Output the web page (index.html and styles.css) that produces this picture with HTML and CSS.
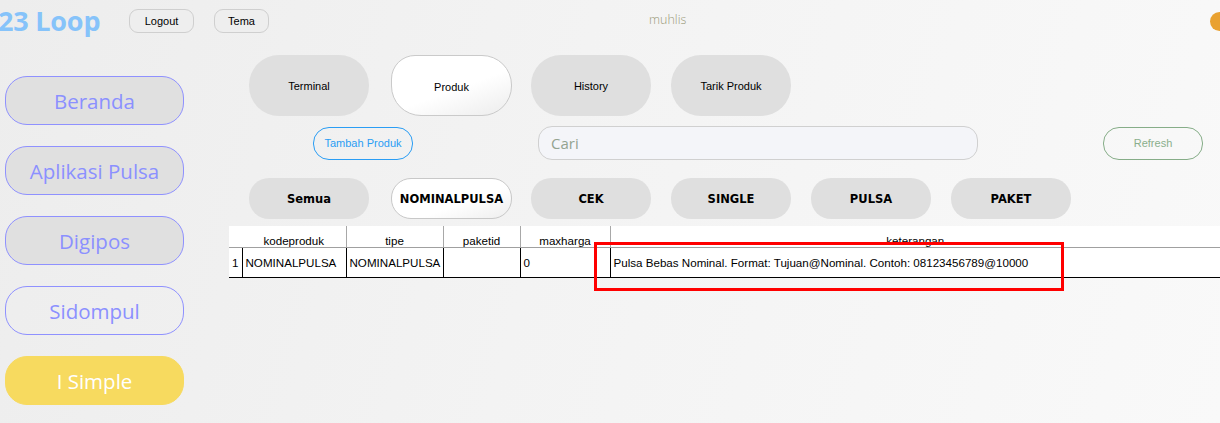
FILE: index.html
```html
<!DOCTYPE html>
<html lang="id">
<head>
    <meta charset="UTF-8">
    <title>23 Loop</title>
    <link rel="stylesheet" href="styles.css">
</head>
<body>
    <div class="topbar">
        <div class="brand">23 Loop</div>
        <button class="small-btn logout">Logout</button>
        <button class="small-btn tema">Tema</button>
        <div class="user">muhlis</div>
        <div class="status-dot"></div>
    </div>

    <div class="layout">
        <div class="sidebar">
            <button class="side-btn">Beranda</button>
            <button class="side-btn">Aplikasi Pulsa</button>
            <button class="side-btn">Digipos</button>
            <button class="side-btn plain">Sidompul</button>
            <button class="side-btn active">I Simple</button>
        </div>

        <div class="main">
            <div class="tabs">
                <button class="tab">Terminal</button>
                <button class="tab selected">Produk</button>
                <button class="tab">History</button>
                <button class="tab">Tarik Produk</button>
            </div>

            <div class="toolbar">
                <button class="add-btn">Tambah Produk</button>
                <input class="search" type="text" placeholder="Cari">
                <button class="refresh-btn">Refresh</button>
            </div>

            <div class="filters">
                <button class="filter">Semua</button>
                <button class="filter selected">NOMINALPULSA</button>
                <button class="filter">CEK</button>
                <button class="filter">SINGLE</button>
                <button class="filter">PULSA</button>
                <button class="filter">PAKET</button>
            </div>

            <div class="grid-wrap">
                <table class="grid">
                    <colgroup>
                        <col class="w-num">
                        <col class="w-kode">
                        <col class="w-tipe">
                        <col class="w-paket">
                        <col class="w-max">
                        <col>
                    </colgroup>
                    <thead>
                        <tr>
                            <th class="num"></th>
                            <th class="first">kodeproduk</th>
                            <th>tipe</th>
                            <th>paketid</th>
                            <th>maxharga</th>
                            <th>keterangan</th>
                        </tr>
                    </thead>
                    <tbody>
                        <tr>
                            <td class="num">1</td>
                            <td>NOMINALPULSA</td>
                            <td>NOMINALPULSA</td>
                            <td></td>
                            <td>0</td>
                            <td>Pulsa Bebas Nominal. Format: Tujuan@Nominal. Contoh: 08123456789@10000</td>
                        </tr>
                    </tbody>
                </table>
                <div class="highlight"></div>
            </div>
        </div>
    </div>
</body>
</html>
```

FILE: styles.css
```css
body {
    margin: 0;
    width: 1220px;
    height: 423px;
    overflow: hidden;
    font-family: 'Liberation Sans', Arial, sans-serif;
    background: linear-gradient(105deg, #ededed 0%, #f3f3f3 45%, #f9f9f9 100%);
}
button {
    font-family: inherit;
    cursor: pointer;
}

/* top bar */
.topbar {
    height: 40px;
    display: flex;
    align-items: center;
}
.brand {
    font-family: 'Open Sans', sans-serif;
    font-weight: 700;
    font-size: 27px;
    color: #86c3fa;
    margin-left: -2px;
    width: 104px;
    letter-spacing: -0.2px;
}
.small-btn {
    height: 24px;
    margin-top: 1px;
    border: 1px solid #cfcfcf;
    border-radius: 9px;
    background-color: #eeeeee;
    font-size: 11px;
    color: #000;
    padding: 0;
}
.logout {
    width: 65px;
    margin-left: 27px;
}
.tema {
    width: 55px;
    margin-left: 20px;
}
.user {
    margin-left: 380px;
    font-family: 'Open Sans', sans-serif;
    font-size: 12.5px;
    font-weight: 300;
    color: #9a9a78;
    margin-top: -1px;
}
.status-dot {
    margin-left: auto;
    margin-right: -9px;
    margin-top: 2px;
    width: 19px;
    height: 19px;
    border-radius: 50%;
    background-color: #e9a130;
}

/* layout */
.layout {
    display: flex;
}
.sidebar {
    width: 229px;
    padding-top: 36px;
    display: flex;
    flex-direction: column;
    gap: 21px;
}
.side-btn {
    margin-left: 5px;
    width: 179px;
    height: 49px;
    border: 1px solid #8f91ff;
    border-radius: 22px;
    background-color: #e0e0e0;
    color: #8b90ff;
    font-family: 'Open Sans', sans-serif;
    font-size: 20.5px;
    padding: 0;
}
.side-btn.plain {
    background-color: transparent;
}
.side-btn.active {
    background-color: #f7da5f;
    border-color: #f7da5f;
    color: #ffffff;
}

.main {
    flex: 1;
    padding-top: 15px;
}

/* tabs */
.tabs {
    display: flex;
    gap: 20px;
    padding-left: 20px;
}
.tab {
    width: 120px;
    height: 61px;
    border: none;
    border-radius: 30px;
    background-color: #dfdfdf;
    font-size: 11px;
    color: #000;
    padding: 0;
}
.tab:first-child,
.filter:first-child {
    margin-right: 2px;
}
.tab.selected {
    width: 121px;
    margin-right: -1px;
    background: linear-gradient(160deg, #ffffff 55%, #ececec 100%);
    border: 1px solid #cacaca;
    border-radius: 24px 30px 30px 30px;
    padding-top: 3px;
}

/* toolbar */
.toolbar {
    display: flex;
    align-items: center;
    margin-top: 10px;
    height: 34px;
}
.add-btn {
    margin-left: 84px;
    width: 100px;
    height: 33px;
    border: 1px solid #2a9df4;
    border-radius: 16px;
    background: transparent;
    color: #2a9df4;
    font-size: 11px;
    padding: 0;
}
.search {
    margin-left: 125px;
    width: 440px;
    height: 34px;
    box-sizing: border-box;
    border: 1px solid #d0d0d0;
    border-radius: 14px;
    background-color: #f4f5f9;
    padding-left: 12px;
    font-family: 'Open Sans', sans-serif;
    font-size: 15px;
    outline: none;
}
.search::placeholder {
    color: #93a390;
}
.refresh-btn {
    margin-left: 125px;
    width: 100px;
    height: 33px;
    border: 1px solid #86ad88;
    border-radius: 16px;
    background: transparent;
    color: #8aaf8c;
    font-size: 11px;
    padding: 0;
}

/* filters */
.filters {
    display: flex;
    gap: 20px;
    padding-left: 20px;
    margin-top: 18px;
}
.filter {
    width: 120px;
    height: 41px;
    border: none;
    border-radius: 20px;
    background-color: #dfdfdf;
    font-family: 'DejaVu Sans', sans-serif;
    font-weight: 700;
    font-size: 11.5px;
    color: #000;
    padding: 0;
}
.filter.selected {
    width: 121px;
    margin-right: -1px;
    background: linear-gradient(160deg, #ffffff 60%, #eeeeee 100%);
    border: 1px solid #c8c8c8;
}

/* table */
.grid-wrap {
    position: relative;
    margin-top: 7px;
}
.grid {
    width: 100%;
    table-layout: fixed;
    border-collapse: collapse;
    background-color: #ffffff;
    font-size: 11.6px;
    color: #000;
}
.w-num { width: 13px; }
.w-kode { width: 104px; }
.w-tipe { width: 97px; }
.w-paket { width: 77px; }
.w-max { width: 90px; }

.grid th {
    height: 21px;
    font-weight: normal;
    text-align: center;
    border-left: 1px solid #a8a8a8;
    border-bottom: 1px solid #a0a0a0;
    padding: 0;
    vertical-align: bottom;
}
.grid th.num,
.grid th.first {
    border-left: none;
}
.grid td {
    height: 29px;
    padding: 0 3px;
    border-left: 1px solid #000;
    border-bottom: 1px solid #000;
    white-space: nowrap;
    overflow: hidden;
}
.grid td.num {
    border-left: none;
    padding: 0 0 0 3px;
}

.highlight {
    position: absolute;
    left: 365px;
    top: 16px;
    width: 464px;
    height: 43px;
    border: 3px solid #ff0000;
}
```
